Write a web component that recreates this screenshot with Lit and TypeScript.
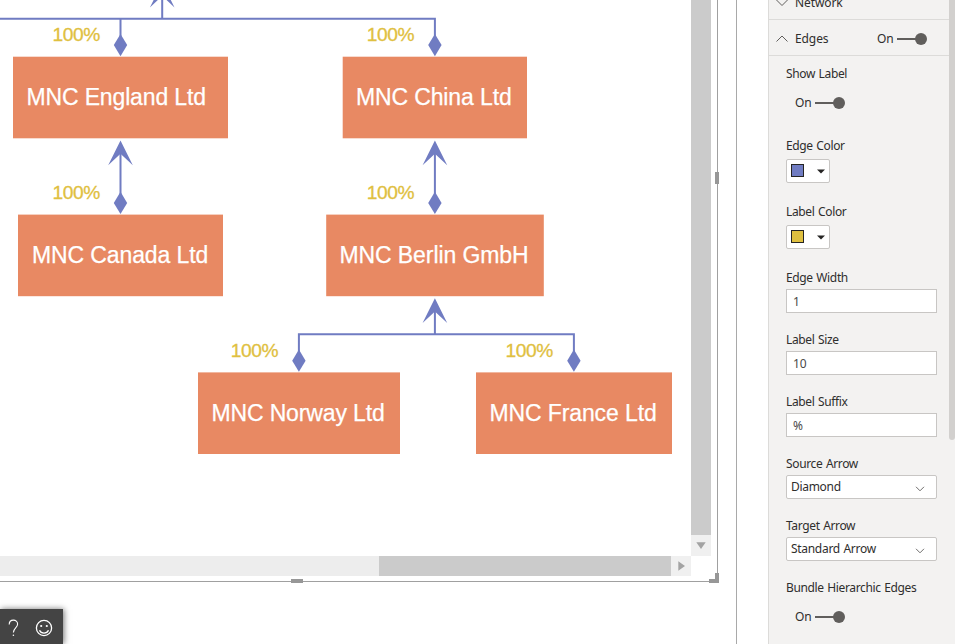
import { LitElement, html, svg, css } from "lit";
import { customElement, property } from "lit/decorators.js";

interface ChartNode { x: number; y: number; w: number; label: string; tx: number; tw: number }

const NODES: ChartNode[] = [
  { x: 13, y: 56.7, w: 215, label: "MNC England Ltd", tx: 26.4, tw: 179.6 },
  { x: 342.7, y: 56.7, w: 184.3, label: "MNC China Ltd", tx: 355.9, tw: 155.8 },
  { x: 18, y: 214.6, w: 205, label: "MNC Canada Ltd", tx: 31.9, tw: 176.3 },
  { x: 326.2, y: 214.6, w: 217.6, label: "MNC Berlin GmbH", tx: 339.4, tw: 189.3 },
  { x: 198, y: 372.4, w: 202, label: "MNC Norway Ltd", tx: 211.4, tw: 173.3 },
  { x: 476, y: 372.4, w: 196, label: "MNC France Ltd", tx: 489.4, tw: 167.3 },
];

const DIAMONDS = [[120.5, 56.2], [434.9, 56.2], [120.5, 214], [434.9, 214], [298.9, 371.8], [573.9, 371.8]];
const ARROWS = [[162.2, -17.3], [120.5, 140.5], [434.9, 140.5], [434.9, 298.3]];
const PERCENTS = [[52.6, 41.2], [366.8, 41.2], [52.6, 199], [366.8, 199], [230.8, 356.8], [505.6, 356.8]];

@customElement("org-chart")
class OrgChart extends LitElement {
  static styles = css`
    :host { display: block; overflow: hidden; }
    svg { display: block; font-family: "Liberation Sans", Arial, sans-serif; }
    .edge { fill: none; stroke: #707cc2; stroke-width: 2; }
    .tip { fill: #707cc2; }
    .node { fill: #e88963; }
    .name { fill: #fff; font-size: 23px; stroke: #fff; stroke-width: 0.25; }
    .share { fill: #dfc040; font-size: 19.2px; stroke: #dfc040; stroke-width: 0.3; }
  `;
  render() {
    return html`<svg width="691" height="556" viewBox="0 0 691 556">
      <path class="edge" d="M0 18.8H434.9V40M162.2 -8V18.8M120.5 18.8V40M120.5 150V198M434.9 150V198M434.9 308V334.3M298.9 356V334.3H573.9V356" />
      ${DIAMONDS.map(([x, y]) => svg`<path class="tip" d="M${x} ${y}l-6.7 -11.1l6.7 -11.1l6.7 11.1z" />`)}
      ${ARROWS.map(([x, y]) => svg`<path class="tip" d="M${x} ${y}l12.3 24.8l-12.3 -11.6l-12.3 11.6z" />`)}
      ${NODES.map((n) => svg`<rect class="node" x=${n.x} y=${n.y} width=${n.w} height="81.6" />
        <text class="name" x=${n.tx} y=${n.y + 48.3} textLength=${n.tw}>${n.label}</text>`)}
      ${PERCENTS.map(([x, y]) => svg`<text class="share" x=${x} y=${y} textLength="47.8">100%</text>`)}
    </svg>`;
  }
}

@customElement("toggle-switch")
class ToggleSwitch extends LitElement {
  static styles = css`
    :host { display: flex; align-items: center; gap: 3px; height: 16px; }
    .text { width: 16px; white-space: nowrap; }
    svg { display: block; }
  `;
  render() {
    return html`<span class="text">On</span>
      <svg width="31" height="14" viewBox="0 0 31 14">
        <path d="M1 7H22" stroke="#605e5c" stroke-width="2" />
        <circle cx="25" cy="7" r="6" fill="#605e5c" />
      </svg>`;
  }
}

@customElement("color-picker")
class ColorPicker extends LitElement {
  @property() color = "#000";
  static styles = css`
    :host { display: flex; align-items: center; justify-content: space-between; box-sizing: border-box;
      width: 44px; height: 24px; padding: 0 4px; border: 1px solid #c8c6c4; border-radius: 2px; background: #fff; }
    .chip { box-sizing: border-box; width: 13px; height: 13px; border: 1px solid #252423; margin-bottom: 1px; }
  `;
  render() {
    return html`<span class="chip" style="background:${this.color}"></span>
      <svg width="8" height="5" viewBox="0 0 8 5"><path d="M0 0.5H8L4 4.5Z" fill="#252423" /></svg>`;
  }
}

@customElement("app-root")
class AppRoot extends LitElement {
  static styles = css`
    :host { display: grid; grid-template-columns: 737px 1fr; width: 955px; height: 644px; overflow: hidden;
      background: #fff; position: relative; font: 12px/16px "Noto Sans", "Open Sans", sans-serif; color: #2f2e2d; }
    .canvas { box-sizing: border-box; border-right: 1px solid #a9a9a9; height: 644px; }
    .visual { position: relative; box-sizing: border-box; width: 718px; height: 582px;
      border-right: 1px solid #a0a0a0; border-bottom: 1px solid #a0a0a0;
      display: grid; grid-template-columns: 691px 20px; grid-template-rows: 556px 20px; }
    .vbar { display: flex; flex-direction: column; }
    .vthumb { height: 535px; background: #cbcbcb; }
    .hbar { display: flex; background: #ededed; }
    .track { width: 379px; }
    .hthumb { width: 292px; background: #cbcbcb; }
    .step { display: flex; align-items: center; justify-content: center; background: #f0f0f0; flex: 1; }
    .grip { position: absolute; background: #979797; }
    .right { left: 715px; top: 172px; width: 4px; height: 12px; }
    .bottom { left: 291px; top: 579px; width: 12px; height: 4px; }
    .corner { position: absolute; left: 709px; top: 573px; box-sizing: border-box; width: 10px; height: 10px;
      border: solid #979797; border-width: 0 4px 4px 0; }
    .help { position: absolute; left: 0; top: 609px; width: 63px; height: 35px; background: #444;
      box-shadow: 1px 0 6px rgba(0,0,0,.55); }
    .help svg { display: block; }
    .side { display: grid; grid-template-columns: 180px 6px; margin-left: 31px; height: 644px; background: #f3f2f1;
      box-sizing: border-box; border-left: 1px solid #dcdbd9; }
    .head { display: flex; align-items: center; box-sizing: border-box; width: 186px; height: 36px; padding: 2px 0 0 7px;
      border-bottom: 1px solid #dcdbd9; }
    .first { height: 20px; padding: 0 0 13px 7px; }
    .title { margin-left: 7px; flex: 1; letter-spacing: -0.1px; }
    .head toggle-switch { margin-right: 28px; }
    .form { display: flex; flex-direction: column; align-items: flex-start; padding: 10px 12px 0 17px; }
    .label { height: 16px; white-space: nowrap; letter-spacing: -0.36px; }
    .label, .select { word-spacing: 0.8px; }
    .form toggle-switch { margin: 13px 0 27px 9px; }
    .form color-picker { margin: 5px 0 21px; }
    .field { box-sizing: border-box; width: 151px; height: 24px; margin: 3px 0 19px; padding: 1px 6px 0;
      border: 1px solid #c8c6c4; background: #fff; line-height: 22px; display: flex; justify-content: space-between; color: #4a4948; }
    .select { padding: 0 11px 0 4px; border-radius: 2px; align-items: center; color: #2f2e2d; letter-spacing: -0.3px; }
    .select svg { margin-top: 4px; }
    .scroll { height: 440px; background: #d2d0ce; border-radius: 0 0 3px 3px; }
  `;
  private select(label: string, value: string) {
    return html`<div class="label">${label}</div>
      <div class="field select"><span>${value}</span>
        <svg width="10" height="6" viewBox="0 0 10 6"><path d="M1 .8L5 4.8L9 .8" fill="none" stroke="#605e5c" stroke-width=".9" /></svg>
      </div>`;
  }
  private input(label: string, value: string) {
    return html`<div class="label">${label}</div><div class="field">${value}</div>`;
  }
  render() {
    return html`
      <div class="canvas">
        <div class="visual">
          <org-chart></org-chart>
          <div class="vbar">
            <div class="vthumb"></div>
            <div class="step"><svg width="10" height="7"><path d="M.3 .3H9.7L5 7Z" fill="#a3a3a3" /></svg></div>
          </div>
          <div class="hbar">
            <div class="track"></div><div class="hthumb"></div>
            <div class="step"><svg width="7" height="10"><path d="M.3 .3V9.7L7 5Z" fill="#a3a3a3" /></svg></div>
          </div>
          <span class="grip right"></span><span class="grip bottom"></span><span class="corner"></span>
        </div>
      </div>
      <div class="side">
        <div>
          <div class="head first">
            <svg width="12" height="8"><path d="M.5 1L6 6.5L11.5 1" fill="none" stroke="#605e5c" /></svg>
            <span class="title">Network</span>
          </div>
          <div class="head">
            <svg width="12" height="8"><path d="M.5 6.5L6 1L11.5 6.5" fill="none" stroke="#605e5c" /></svg>
            <span class="title">Edges</span>
            <toggle-switch></toggle-switch>
          </div>
          <div class="form">
            <div class="label">Show Label</div>
            <toggle-switch></toggle-switch>
            <div class="label">Edge Color</div>
            <color-picker color="#707cc2"></color-picker>
            <div class="label">Label Color</div>
            <color-picker color="#dfc040"></color-picker>
            ${this.input("Edge Width", "1")}
            ${this.input("Label Size", "10")}
            ${this.input("Label Suffix", "%")}
            ${this.select("Source Arrow", "Diamond")}
            ${this.select("Target Arrow", "Standard Arrow")}
            <div class="label">Bundle Hierarchic Edges</div>
            <toggle-switch></toggle-switch>
          </div>
        </div>
        <div class="scroll"></div>
      </div>
      <div class="help">
        <svg width="63" height="35" viewBox="0 0 63 35" fill="none" stroke="#fff" stroke-width="1.1">
          <path d="M9.2 15.5C9.2 9.8 17.6 9.8 17.6 15C17.6 18.8 13.4 19 13.4 23.6" />
          <circle cx="13.4" cy="26.2" r=".8" fill="#fff" stroke="none" />
          <circle cx="44" cy="19" r="7.6" stroke-width="1.3" />
          <path d="M39.5 21.2C41.2 25 46.8 25 48.5 21.2" stroke-width="1.3" />
          <circle cx="41.2" cy="17" r="1.1" fill="#fff" stroke="none" />
          <circle cx="46.8" cy="17" r="1.1" fill="#fff" stroke="none" />
        </svg>
      </div>`;
  }
}
